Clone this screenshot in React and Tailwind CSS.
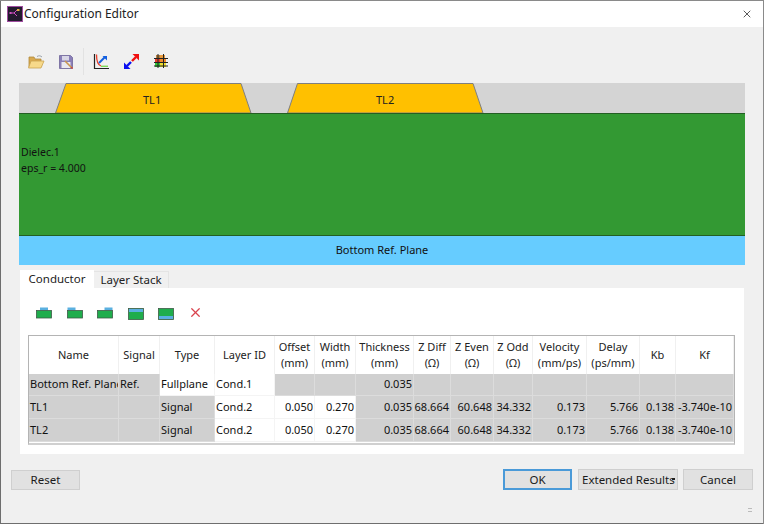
import React from "react";
import { X } from "lucide-react";

const FONT = "font-['Noto_Sans','Open_Sans',sans-serif]";

const columns = [
  { label: ["Name"], width: 90 },
  { label: ["Signal"], width: 41 },
  { label: ["Type"], width: 55 },
  { label: ["Layer ID"], width: 60 },
  { label: ["Offset", "(mm)"], width: 40 },
  { label: ["Width", "(mm)"], width: 41 },
  { label: ["Thickness", "(mm)"], width: 58 },
  { label: ["Z Diff", "(Ω)"], width: 37 },
  { label: ["Z Even", "(Ω)"], width: 43 },
  { label: ["Z Odd", "(Ω)"], width: 39 },
  { label: ["Velocity", "(mm/ps)"], width: 54 },
  { label: ["Delay", "(ps/mm)"], width: 53 },
  { label: ["Kb"], width: 36 },
  { label: ["Kf"], width: 58 },
];

// g = greyed out (read only) cell
const rows = [
  {
    height: 22,
    cells: [
      { t: "Bottom Ref. Plane", g: 1 }, { t: "Ref.", g: 1 }, { t: "Fullplane" }, { t: "Cond.1" },
      { g: 1 }, { g: 1 }, { t: "0.035", g: 1, r: 1 }, { g: 1 }, { g: 1 }, { g: 1 }, { g: 1 }, { g: 1 }, { g: 1 }, { g: 1 },
    ],
  },
  {
    height: 23,
    cells: [
      { t: "TL1", g: 1 }, { g: 1 }, { t: "Signal", g: 1 }, { t: "Cond.2" },
      { t: "0.050", r: 1 }, { t: "0.270", r: 1 }, { t: "0.035", g: 1, r: 1 }, { t: "68.664", g: 1, r: 1 }, { t: "60.648", g: 1, r: 1 },
      { t: "34.332", g: 1, r: 1 }, { t: "0.173", g: 1, r: 1 }, { t: "5.766", g: 1, r: 1 }, { t: "0.138", g: 1, r: 1 }, { t: "-3.740e-10", g: 1, r: 1 },
    ],
  },
  {
    height: 23,
    cells: [
      { t: "TL2", g: 1 }, { g: 1 }, { t: "Signal", g: 1 }, { t: "Cond.2" },
      { t: "0.050", r: 1 }, { t: "0.270", r: 1 }, { t: "0.035", g: 1, r: 1 }, { t: "68.664", g: 1, r: 1 }, { t: "60.648", g: 1, r: 1 },
      { t: "34.332", g: 1, r: 1 }, { t: "0.173", g: 1, r: 1 }, { t: "5.766", g: 1, r: 1 }, { t: "0.138", g: 1, r: 1 }, { t: "-3.740e-10", g: 1, r: 1 },
    ],
  },
];

function FolderIcon() {
  return (
    <svg width="18" height="16" viewBox="0 0 18 16">
      <path d="M2 3h5l1 2h6v8H2z" fill="#d9a94e" stroke="#b08a3c" strokeWidth="0.8" />
      <path d="M4 7h13l-3 7H1.5z" fill="#f7d98a" stroke="#c9a24f" strokeWidth="0.8" />
      <path d="M10 2.5c2-1.2 3.5-.8 5 .5" fill="none" stroke="#9aa3ad" strokeWidth="1" />
    </svg>
  );
}

function SaveIcon() {
  return (
    <svg width="16" height="16" viewBox="0 0 16 16">
      <path d="M1.5 1.5h11l2 2v11h-13z" fill="#8a7fb8" stroke="#6f6699" strokeWidth="0.8" />
      <rect x="4" y="2" width="7" height="4.5" fill="#d8d6e6" />
      <rect x="3.5" y="8" width="9" height="6" fill="#e9e8f0" />
      <path d="M7 7l7 7" stroke="#c9964e" strokeWidth="1.6" />
      <path d="M13.2 13.2l1.3 1.3" stroke="#d0483c" strokeWidth="1.6" />
    </svg>
  );
}

function AxesIcon() {
  return (
    <svg width="17" height="17" viewBox="0 0 17 17">
      <path d="M1.5 1v14.5H16" fill="none" stroke="#222" strokeWidth="1.2" />
      <path d="M3.5 1.5C3.5 8 5 12 8 13" fill="none" stroke="#e8402c" strokeWidth="1.3" />
      <path d="M8 13.3h7" stroke="#7ed957" strokeWidth="1.4" />
      <path d="M6 10l6-6" stroke="#1560e0" strokeWidth="2" />
      <path d="M9.5 3h4.5v4.5z" fill="#1560e0" />
    </svg>
  );
}

function ResizeIcon() {
  return (
    <svg width="17" height="17" viewBox="0 0 17 17">
      <path d="M9 8l4-4" stroke="#f01010" strokeWidth="2.4" />
      <path d="M9.5 1H16v6.5z" fill="#f01010" />
      <path d="M8 9l-4 4" stroke="#0a10f0" strokeWidth="2.4" />
      <path d="M1 9.5V16h6.5z" fill="#0a10f0" />
    </svg>
  );
}

function GridIcon() {
  return (
    <svg width="16" height="16" viewBox="0 0 16 16">
      <rect x="3" y="2" width="4" height="4" fill="#b9803c" />
      <rect x="7" y="2" width="5" height="4" fill="#e89a3c" />
      <rect x="2" y="6" width="5" height="4" fill="#e8402c" />
      <rect x="7" y="6" width="6" height="4" fill="#f08a2c" />
      <rect x="2" y="10" width="5" height="4" fill="#38c838" />
      <rect x="7" y="10" width="6" height="4" fill="#f0e030" />
      <path d="M1 5.5h14M1 9.5h14M1 13h14M5 1v14M10.5 1v14" stroke="#222" strokeWidth="1" />
    </svg>
  );
}

// mode says where the blue cap sits on the green block
function LayerIcon({ mode }) {
  return (
    <svg width="16" height="13" viewBox="0 0 16 13">
      {mode === "center" && <rect x="4" y="1.5" width="8" height="3" fill="#5ab0e0" />}
      {mode === "left" && <rect x="0.5" y="1.5" width="8" height="3" fill="#5ab0e0" />}
      {mode === "right" && <rect x="7.5" y="1.5" width="8" height="3" fill="#5ab0e0" />}
      <rect x="0.5" y="4.5" width="15" height="7.5" fill="#1fad4c" stroke="#3d5a48" strokeWidth="0.8" />
    </svg>
  );
}

function LayerBandIcon({ top }) {
  return (
    <svg width="16" height="12" viewBox="0 0 16 12">
      <rect x="0.5" y="0.5" width="15" height="11" fill="#1fad4c" stroke="#3d5a48" strokeWidth="0.8" />
      <rect x="1" y={top ? 1 : 8} width="14" height="3" fill="#5ab0e0" />
    </svg>
  );
}

function AppIcon() {
  return (
    <svg width="16" height="16" viewBox="0 0 16 16" className="absolute left-[7px] top-[6px]">
      <rect x="0.5" y="0.5" width="15" height="15" fill="#231b2e" stroke="#a04da0" strokeWidth="1" />
      <path d="M3 7h4l3-3M7 7l3 3" fill="none" stroke="#d050c0" strokeWidth="1" />
      <rect x="10" y="3" width="2.5" height="2" fill="#e0b040" />
      <rect x="2.5" y="6" width="2" height="2" fill="#d050c0" />
    </svg>
  );
}

function Btn({ className, children }) {
  return (
    <div className={`absolute flex items-center justify-center bg-[#e1e1e1] border border-[#cfcfcf] text-[11.5px] text-[#1a1a1a] ${className}`}>
      {children}
    </div>
  );
}

export default function App() {
  return (
    <div className={`${FONT} relative w-[764px] h-[524px] overflow-hidden bg-[#f0f0f0] text-[#111]`}>
      {/* Title bar */}
      <div className="absolute left-0 top-0 w-full h-[27px] bg-white">
        <AppIcon />
        <div className="absolute left-[24px] top-[5px] text-[12px] leading-[18px] text-[#222]">Configuration Editor</div>
        <X className="absolute left-[741px] top-[8px] text-[#222]" size={12} strokeWidth={1.5} />
      </div>

      {/* Toolbar */}
      <div className="absolute left-[27px] top-[54px]"><FolderIcon /></div>
      <div className="absolute left-[58px] top-[54px]"><SaveIcon /></div>
      <div className="absolute left-[83px] top-[48px] w-px h-[27px] bg-[#e2e2e2]" />
      <div className="absolute left-[93px] top-[53px]"><AxesIcon /></div>
      <div className="absolute left-[123px] top-[53px]"><ResizeIcon /></div>
      <div className="absolute left-[153px] top-[53px]"><GridIcon /></div>

      {/* Stack-up drawing */}
      <div className="absolute left-[19px] top-[83px] w-[726px] h-[30px] bg-[#d4d4d4]" />
      <svg className="absolute left-[19px] top-[83px]" width="726" height="31" viewBox="0 0 726 31">
        <polygon points="47,0.5 222,0.5 232,30 36.5,30" fill="#ffc000" stroke="#7f7f7f" strokeWidth="1" />
        <polygon points="278.5,0.5 454,0.5 464,30 268.5,30" fill="#ffc000" stroke="#7f7f7f" strokeWidth="1" />
      </svg>
      <div className="absolute left-[143px] top-[92px] text-[11px] leading-[16px] text-[#222]">TL1</div>
      <div className="absolute left-[376px] top-[92px] text-[11px] leading-[16px] text-[#222]">TL2</div>
      <div className="absolute left-[19px] top-[113px] w-[726px] h-[123px] bg-[#339933] border-t border-b border-[#235f23]">
        <div className="absolute left-[2px] top-[30px] text-[10.5px] leading-[16px] text-[#111]">
          <div>Dielec.1</div>
          <div>eps_r = 4.000</div>
        </div>
      </div>
      <div className="absolute left-[19px] top-[236px] w-[726px] h-[29px] bg-[#66ccff] flex items-center justify-center text-[11px] text-[#111]">
        Bottom Ref. Plane
      </div>

      {/* Tabs */}
      <div className="absolute left-[20px] top-[288px] w-[724px] h-[166px] bg-white" />
      <div className="absolute left-[20px] top-[270px] w-[74px] h-[18px] bg-white flex items-center justify-center text-[11.5px] text-[#222]">Conductor</div>
      <div className="absolute left-[94px] top-[271px] w-[75px] h-[17px] bg-[#f0f0f0] border-t border-r border-[#e4e4e4] flex items-center justify-center text-[11.5px] text-[#222]">Layer Stack</div>

      {/* Layer toolbar */}
      <div className="absolute left-[36px] top-[306px]"><LayerIcon mode="center" /></div>
      <div className="absolute left-[67px] top-[306px]"><LayerIcon mode="left" /></div>
      <div className="absolute left-[97px] top-[306px]"><LayerIcon mode="right" /></div>
      <div className="absolute left-[128px] top-[308px]"><LayerBandIcon top /></div>
      <div className="absolute left-[158px] top-[308px]"><LayerBandIcon /></div>
      <X className="absolute left-[188px] top-[305px] text-[#d9434e]" size={15} strokeWidth={2} />

      {/* Conductor table */}
      <div className="absolute left-[28px] top-[335px] w-[707px] h-[110px] bg-white border border-[#b4b4b4] border-b-2 border-b-[#d0d0d0]">
        <div className="flex h-[38px]">
          {columns.map((c) => (
            <div
              key={c.label[0]}
              className="shrink-0 flex flex-col items-center justify-center border-r border-[#f0f0f0] text-[11px] leading-[16px] text-[#222]"
              style={{ width: c.width }}
            >
              {c.label.map((l) => <div key={l} className="whitespace-nowrap">{l}</div>)}
            </div>
          ))}
        </div>
        {rows.map((row, i) => (
          <div key={i} className="flex" style={{ height: row.height }}>
            {row.cells.map((cell, j) => (
              <div
                key={j}
                className={`shrink-0 flex items-center overflow-hidden whitespace-nowrap px-[1px] border-r border-b text-[11px] text-[#111] ${cell.g ? "bg-[#d0d0d0] border-[#dcdcdc]" : "bg-white border-[#f4f4f4]"} ${cell.r ? "justify-end" : "justify-start"}`}
                style={{ width: columns[j].width }}
              >
                {cell.t}
              </div>
            ))}
          </div>
        ))}
      </div>

      {/* Dialog buttons */}
      <Btn className="left-[11px] top-[470px] w-[69px] h-[20px]">Reset</Btn>
      <Btn className="left-[503px] top-[469px] w-[69px] h-[21px] !border-2 !border-[#4a9ad8]">OK</Btn>
      <Btn className="left-[578px] top-[469px] w-[100px] h-[21px] !justify-start pl-[3px]">
        Extended Results
        <div className="absolute left-[93px] top-[8px] w-[3px] h-[2px] bg-[#222]" />
      </Btn>
      <Btn className="left-[683px] top-[469px] w-[70px] h-[21px]">Cancel</Btn>

      {/* Size grip */}
      <div className="absolute left-[748px] top-[508px] w-[4px] h-[4px] border-t border-b border-[#bbbbbb]" />

      {/* Window edge */}
      <div className="absolute left-0 top-0 w-[1px] h-full bg-[#6e6e6e]" />
      <div className="absolute left-0 top-0 w-full h-[1px] bg-[#8a8a8a]" />
      <div className="absolute left-0 bottom-0 w-full h-[1px] bg-[#6e6e6e]" />
      <div className="absolute right-0 top-0 w-[1px] h-full bg-[#8a8a8a]" />
    </div>
  );
}
